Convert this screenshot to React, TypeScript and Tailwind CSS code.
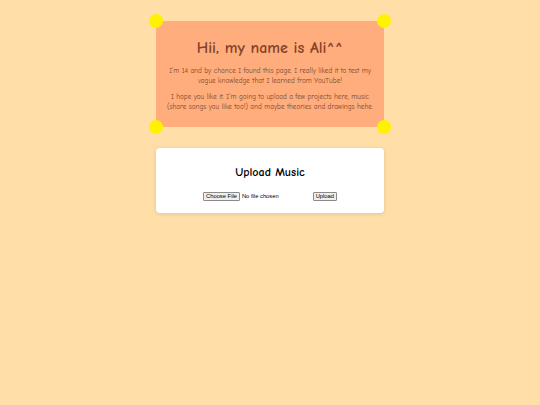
import React from "react";

const Dot = ({ cls }: { cls: string }) => (
  <div className={`absolute w-[14px] h-[14px] rounded-full bg-[#fff200] ${cls}`} />
);

export default function App() {
  return (
    <div
      className="w-[540px] h-[405px] bg-[#ffdea8] flex flex-col items-center pt-[21px]"
      style={{ fontFamily: '"Comic Sans MS", "Comic Neue", "DejaVu Sans", sans-serif' }}
    >
      <div className="relative w-[228px] h-[106px] bg-[#ffad7c] flex flex-col items-center pt-[16px]">
        <Dot cls="-left-[7px] -top-[7px]" />
        <Dot cls="-right-[7px] -top-[7px]" />
        <Dot cls="-left-[7px] -bottom-[7px]" />
        <Dot cls="-right-[7px] -bottom-[7px]" />
        <h1 className="text-[16px] leading-[22px] font-bold text-[#85432a]">Hii, my name is Ali^^</h1>
        <p className="mt-[7px] w-[212px] text-center text-[7.2px] leading-[10px] text-[#7a4a2e]">
          I'm 14 and by chance I found this page. I really liked it to test my vague knowledge that I learned from YouTube!
        </p>
        <p className="mt-[6px] w-[212px] text-center text-[7.2px] leading-[10px] text-[#7a4a2e]">
          I hope you like it. I'm going to upload a few projects here, music (share songs you like too!) and maybe theories and drawings hehe.
        </p>
      </div>
      <div className="mt-[21px] w-[228px] h-[65px] bg-white rounded-[4px] shadow-[0_1px_4px_rgba(0,0,0,0.12)] flex flex-col items-center pt-[16px]">
        <h2 className="text-[12px] leading-[16px] font-bold text-black">Upload Music</h2>
        <div className="mt-[12px] flex items-center w-[134px]" style={{ fontFamily: '"Liberation Sans", Arial, sans-serif' }}>
          <span className="h-[9px] px-[2px] border border-[#8a8a8a] rounded-[1px] bg-[#efefef] text-[5.8px] leading-[7px] text-black">Choose File</span>
          <span className="ml-[2px] text-[5.8px] leading-[7px] text-black">No file chosen</span>
          <span className="ml-auto h-[9px] px-[2px] border border-[#8a8a8a] rounded-[1px] bg-[#efefef] text-[5.8px] leading-[7px] text-black">Upload</span>
        </div>
      </div>
    </div>
  );
}
